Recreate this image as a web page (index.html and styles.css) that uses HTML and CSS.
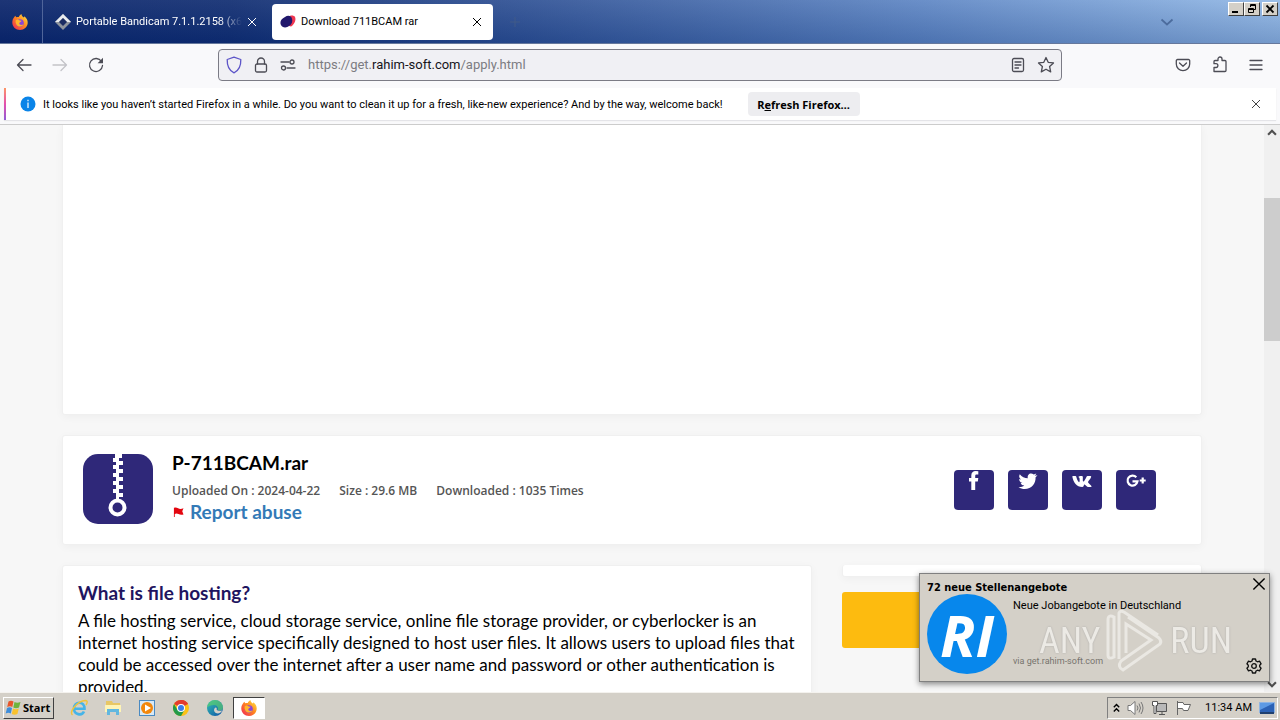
FILE: index.html
```html
<!DOCTYPE html>
<html lang="en">
<head>
<meta charset="utf-8">
<title>Download 711BCAM rar</title>
<link rel="stylesheet" href="styles.css">
</head>
<body class="desktop">
<svg class="defs" aria-hidden="true">
  <defs>
    <linearGradient id="flame" x1="1" y1="0" x2="0" y2="1"><stop offset="0" stop-color="#fff04a"/><stop offset=".45" stop-color="#ff8a1e"/><stop offset="1" stop-color="#f0205a"/></linearGradient>
    <linearGradient id="edgeg" x1="0" y1="0" x2="1" y2="1"><stop offset="0" stop-color="#35c1b1"/><stop offset="1" stop-color="#0b4fa8"/></linearGradient>
    <symbol id="firefox" viewBox="0 0 16 16">
      <path fill="url(#flame)" d="M2.300 3 3.300 1.800 4.200 3.300C5 3 6 2.900 6.800 3.100 7 2 8 .8 9.400 0 9.500 2 11 2.700 12 3.500L12.400 2.300C14.500 4 15.900 6.300 15.700 9 15.400 13 12.200 16 8 16 3.800 16 .4 12.900.3 8.800.2 6.500 1 4.500 2.300 3Z"/>
      <circle cx="8" cy="9" r="3.800" fill="#8a45d8"/>
      <path fill="#ffb52b" d="M3.600 6.500C5 5.200 6.600 5.300 7.700 6.400L9.600 6.700C9.300 7.900 7.600 7.900 7.300 9 7 11 9.600 11.500 11.400 10.300 10.500 13.200 5.500 13.300 4.200 10.200 3.600 9 3.400 7.600 3.600 6.500Z"/>
    </symbol>
    <symbol id="close" viewBox="0 0 10 10"><path d="M1 1 9 9M9 1 1 9" fill="none" stroke="currentColor" stroke-width="1"/></symbol>
    <symbol id="chevron" viewBox="0 0 14 8"><path d="M1.500 1.500 7 6.500 12.500 1.500" fill="none" stroke="currentColor" stroke-width="1.700"/></symbol>
  </defs>
</svg>

<header class="titlebar">
  <div class="pinned"><svg width="16" height="16"><use href="#firefox"/></svg></div>
  <div class="tab">
    <svg width="16" height="16" viewBox="0 0 16 16"><path d="M8 0 16 8 8 16 0 8Z" fill="#8f959e"/><path d="M8 0 16 8H12L8 4 4 8H0Z" fill="#e8ebef"/><path d="M8 4 12 8 8 12 4 8Z" fill="#1c2d63"/></svg>
    <span class="tab-title fade">Portable Bandicam 7.1.1.2158 (x64</span>
    <button class="plain" aria-label="Close tab"><svg width="10" height="10"><use href="#close"/></svg></button>
  </div>
  <div class="tab active">
    <svg width="16" height="16" viewBox="0 0 16 16"><path fill="#ef3550" d="M8 3C10 1 14 1 15 3 16.500 6 14 11 11 12.500L5 11Z"/><path fill="#21186c" d="M5 3C8 .5 12 2 12 5 13 8 11 11 9 12 7 14 2 14 1 11-.5 8 1 5 5 3Z"/></svg>
    <span class="tab-title">Download 711BCAM rar</span>
    <button class="plain" aria-label="Close tab"><svg width="10" height="10"><use href="#close"/></svg></button>
  </div>
  <button class="plain new-tab" aria-label="New tab"><svg width="10" height="10" viewBox="0 0 10 10"><path d="M5 0V10M0 5H10" stroke="currentColor" stroke-width="1"/></svg></button>
  <button class="plain all-tabs" aria-label="List all tabs"><svg width="14" height="8"><use href="#chevron"/></svg></button>
  <div class="window-buttons">
    <button aria-label="Minimize"><svg width="10" height="10" viewBox="0 0 10 10"><path d="M1 7h6v2H1Z"/></svg></button>
    <button aria-label="Restore"><svg width="10" height="10" viewBox="0 0 10 10"><path fill="none" stroke="#000" d="M3.500 3V.5h5v5H7M3 1.500H9M1.500 4.500h5v4h-5ZM1 5.500H7"/></svg></button>
    <button class="gap" aria-label="Close"><svg width="10" height="10" viewBox="0 0 10 10"><path stroke="#000" stroke-width="1.800" d="M1.500 1.500 8.500 8.500M8.500 1.500 1.500 8.500"/></svg></button>
  </div>
</header>

<nav class="toolbar">
  <button class="plain" aria-label="Back"><svg width="16" height="14" viewBox="0 0 16 14"><path d="M15 7H1.500M7 1.500 1.500 7 7 12.500" class="line"/></svg></button>
  <button class="plain dim" aria-label="Forward"><svg width="16" height="14" viewBox="0 0 16 14"><path d="M1 7H14.500M9 1.500 14.500 7 9 12.500" class="line"/></svg></button>
  <button class="plain" aria-label="Reload"><svg width="16" height="16" viewBox="0 0 16 16"><path d="M13.500 4.500A6.500 6.500 0 1 0 14.500 8.500" class="line"/><path fill="currentColor" d="M15 .8V6.200H9.600Z"/></svg></button>
  <div class="urlbar">
    <svg class="shield" width="16" height="18" viewBox="0 0 16 18"><path d="M8 1.200 14.800 3.500C15 9.500 13 14.500 8 16.800 3 14.500 1 9.500 1.200 3.500Z" class="line"/></svg>
    <svg width="14" height="16" viewBox="0 0 14 16"><rect x="1.500" y="7" width="11" height="8" rx="1.500" class="line"/><path d="M3.500 7V4.500a3.500 3.500 0 0 1 7 0V7" class="line"/></svg>
    <svg width="16" height="12" viewBox="0 0 16 12"><path d="M1 3H9M7 9H15" class="line"/><circle cx="12" cy="3" r="2" class="line"/><circle cx="3.500" cy="9" r="2" class="line"/></svg>
    <span class="address"><span class="sub">https://get.</span>rahim-soft.com<span class="sub">/apply.html</span></span>
    <svg width="14" height="16" viewBox="0 0 14 16"><rect x="1.500" y="1.500" width="11" height="13" rx="1.500" class="line"/><path d="M4 5H10M4 8H10M4 11H7.500" class="line"/></svg>
    <svg width="18" height="18" viewBox="0 0 18 18"><path d="M9 1.500 11.200 6.300 16.500 6.900 12.600 10.500 13.700 15.900 9 13.200 4.300 15.900 5.400 10.500 1.500 6.900 6.800 6.300Z" class="line"/></svg>
  </div>
  <div class="tools">
    <button class="plain" aria-label="Pocket"><svg width="16" height="14" viewBox="0 0 16 14"><path d="M2.500 1.500h11a1.200 1.200 0 0 1 1.200 1.200V6A6.700 6.700 0 0 1 1.300 6V2.700A1.200 1.200 0 0 1 2.500 1.500ZM4.500 5 8 8.300 11.500 5" class="line"/></svg></button>
    <button class="plain" aria-label="Extensions"><svg width="16" height="17" viewBox="0 0 16 17"><path d="M2 15.500V11.500H4a1.900 1.900 0 0 0 0-3.800H2V5.500Q2 4.500 3 4.500H6V3a2 2 0 0 1 4 0V4.500H13Q14 4.500 14 5.500V14.500Q14 15.500 13 15.500Z" class="line"/></svg></button>
    <button class="plain" aria-label="Menu"><svg width="14" height="12" viewBox="0 0 14 12"><path d="M1 1.500H13M1 6H13M1 10.500H13" class="line"/></svg></button>
  </div>
</nav>

<section class="notice">
  <svg width="16" height="16" viewBox="0 0 16 16"><circle cx="8" cy="8" r="7.500" fill="#0a84e8"/><path d="M7.400 6.500h1.200V12H7.400ZM7.400 3.800h1.200V5.200H7.400Z" fill="#fff"/></svg>
  <span>It looks like you haven’t started Firefox in a while. Do you want to clean it up for a fresh, like-new experience? And by the way, welcome back!</span>
  <button class="refresh">R<u>e</u>fresh Firefox…</button>
  <button class="plain dismiss" aria-label="Dismiss"><svg width="10" height="10"><use href="#close"/></svg></button>
</section>

<div class="viewport">
  <main class="page">
    <div class="container">
      <section class="card banner"></section>
      <section class="card file">
        <svg class="zip" width="70" height="70" viewBox="0 0 70 70"><rect width="70" height="70" rx="15" fill="#2f2879"/><path fill="#fff" d="M32 0h7v4h-7ZM30 4h5v4h-5ZM34 7h6v4h-6ZM30 11h5v4h-5ZM34 15h6v4h-6ZM30 19h5v4h-5ZM34 23h6v4h-6ZM30 27h5v4h-5ZM34 31h6v4h-6ZM30 35h5v4h-5ZM34 39h6v4h-6ZM33 0h3v46h-3Z"/><circle cx="34.500" cy="53.500" r="7" fill="#2f2879" stroke="#fff" stroke-width="4"/></svg>
        <div class="info">
          <h1>P-711BCAM.rar</h1>
          <div class="meta"><span>Uploaded On : 2024-04-22</span><span>Size : 29.6 MB</span><span>Downloaded : 1035 Times</span></div>
          <a class="report" href="#"><svg width="13" height="10" viewBox="0 0 13 12"><path fill="#e3060f" d="M1 1Q3.500 0 6 1.500T12.500 1.500L11 5 12.500 9Q9 10 6.500 8.500T2 8.500V12H1Z"/></svg>Report abuse</a>
        </div>
        <div class="social">
          <a href="#" aria-label="Facebook"><svg width="20" height="20" viewBox="0 0 20 20"><path fill="#fff" d="M14.300.3V3.600H12.700C11.400 3.600 11.200 4.200 11.200 5.100V7H14.300L13.800 10.400H11.200V19H7.300V10.400H5V7H7.300V4.500C7.300 1.600 9.100 0 11.700 0Z"/></svg></a>
          <a href="#" aria-label="Twitter"><svg width="20" height="20" viewBox="0 0 20 20"><path fill="#fff" d="M19.500 4.300A8 8 0 0 1 17.600 6.300C17.900 12.500 13.500 18 6.800 18 4.500 18 2.300 17.300.5 16.200 2.600 16.400 4.700 15.800 6.300 14.600A4 4 0 0 1 2.600 11.900C3.200 12 3.800 12 4.300 11.800A4 4 0 0 1 1.200 7.900C1.700 8.200 2.300 8.400 3 8.400A4 4 0 0 1 1.800 3.200 11 11 0 0 0 9.800 7.200C9 3.500 12.500.9 15.800 3.500 16.700 3.300 17.500 3 18.300 2.500 18 3.500 17.400 4.200 16.600 4.700Z"/></svg></a>
          <a href="#" aria-label="VK"><svg width="20" height="20" viewBox="0 0 20 20"><path fill="#fff" d="M10.300 16C4.500 16 1.500 11.500.3 5.500Q.3 5 1 5H3.500Q4 5 4.200 5.500C4.800 8 5.800 10.300 7 11.200 7.800 11.500 7.700 9 7.500 7.300 7.300 6.500 6.800 6.400 6.400 6.100 7 5 9 4.800 10.200 5.100 11.200 5.300 10.800 7 10.800 9 10.800 10.800 11.500 10.700 12.200 9.900 13.200 8.800 14 7.200 14.700 5.600Q14.900 5 15.500 5H18.400C19.900 5 19 6.600 18.300 7.700 17.300 9.300 15.800 10.500 16 11.200 16.300 12.200 18.500 13.500 19.400 15 19.700 15.600 19.400 16 18.700 16H15.800C14.800 16 13.500 13.800 12.400 13.600 11.500 13.500 12.300 16 10.300 16Z"/></svg></a>
          <a href="#" aria-label="Google Plus"><svg width="22" height="20" viewBox="0 0 22 20"><path fill="none" stroke="#fff" stroke-width="2.200" d="M11.300 6.200A5 5 0 1 0 12.500 10.400H7.500"/><path stroke="#fff" stroke-width="2.200" d="M17.700 6.500V12.500M14.700 9.500H20.700"/></svg></a>
        </div>
      </section>
      <div class="columns">
        <article class="card about">
          <h2>What is file hosting?</h2>
          <p>A file hosting service, cloud storage service, online file storage provider, or cyberlocker is an internet hosting service specifically designed to host user files. It allows users to upload files that could be accessed over the internet after a user name and password or other authentication is provided.</p>
        </article>
        <aside>
          <div class="card strip"></div>
          <button class="download" aria-label="Download"></button>
        </aside>
      </div>
    </div>
  </main>
  <div class="scrollbar">
    <svg width="10" height="7" viewBox="0 0 14 8"><path d="M1.500 7 7 1.500 12.500 7" fill="none" stroke="#505050" stroke-width="3"/></svg>
    <div class="thumb"></div>
    <svg class="down" width="10" height="7" viewBox="0 0 14 8"><path d="M1.500 1 7 6.500 12.500 1" fill="none" stroke="#505050" stroke-width="3"/></svg>
  </div>
</div>

<aside class="toast">
  <div class="toast-head"><b>72 neue Stellenangebote</b></div>
  <div class="toast-body">
    <div class="logo">RI</div>
    <div class="toast-text"><span>Neue Jobangebote in Deutschland</span><small>via get.rahim-soft.com</small></div>
  </div>
  <button class="plain toast-close" aria-label="Close notification"><svg width="14" height="14"><use href="#close"/></svg></button>
  <button class="plain toast-gear" aria-label="Settings"><svg width="16" height="16" viewBox="0 0 16 16"><path fill="none" stroke="#111" stroke-width="1.300" stroke-linejoin="round" d="M6.500 1h3l.5 2 1.500.8 2-.6 1.600 2.600L13.700 7.200v1.600l1.400 1.400-1.600 2.600-2-.6L10 13l-.5 2h-3L6 13l-1.500-.8-2 .6L.9 10.200 2.300 8.800V7.200L.9 5.800 2.500 3.200l2 .6L6 3Z"/><circle cx="8" cy="8" r="2.300" fill="none" stroke="#111" stroke-width="1.300"/></svg></button>
</aside>
<div class="watermark">
  <span>ANY</span>
  <svg width="58" height="64" viewBox="0 0 58 64"><g fill="none" stroke="#f2f0ec" stroke-width="3"><path d="M8 48V8Q2 5 2 11V46Q2 51 8 48Z"/><path d="M13 50V4Q14 1 18 3L52 26M20 44V15L45 31 15 52Q11 58 17 61L54 35Q56 32 53 29L22 8"/></g></svg>
  <span>RUN</span>
</div>

<footer class="taskbar">
  <button class="start"><svg width="17" height="17" viewBox="0 0 17 17"><path fill="#e8562a" d="M3.500 2.500Q6 .8 8.500 2.500L7.300 8Q5 6.500 2.200 8Z"/><path fill="#6fb43c" d="M9.500 3Q12 4.500 15.500 3L14 8.500Q11 10 8.300 8.500Z"/><path fill="#3c8ddb" d="M2 9Q4.500 7.500 7 9L5.800 14.500Q3.500 13 .7 14.500Z"/><path fill="#f9c22e" d="M8 9.500Q11 11 13.800 9.500L12.400 15Q9.500 16.500 6.800 15Z"/></svg>Start</button>
  <div class="launch">
    <button class="plain" aria-label="Internet Explorer"><svg width="18" height="18" viewBox="0 0 18 18"><path fill="none" stroke="#45b4e8" stroke-width="2.600" d="M4.500 9.800H14.500C14.700 1.500 4 2 4 9.500 4 16 12 17 14 12.500"/><path fill="none" stroke="#efc33c" stroke-width="1.400" d="M2.500 16C-1 13 7 2 15.500 1.500 18 1.500 17.300 4 16 6"/></svg></button>
    <button class="plain" aria-label="Explorer"><svg width="18" height="18" viewBox="0 0 18 18"><path fill="#e8c764" d="M2 2h6l1 2h7v9H2Z"/><path fill="#fff4b5" d="M1 6h16v7H1Z"/><path fill="#62b7df" d="M3 10h12v6h-3v-3H6v3H3Z"/></svg></button>
    <button class="plain" aria-label="Media Player"><svg width="18" height="18" viewBox="0 0 18 18"><rect x="1.500" y="1.500" width="15" height="15" fill="#d8e9f6" stroke="#4a8ac2"/><circle cx="9" cy="9" r="6" fill="#f2870c"/><path fill="#fff" d="M7 5.500 13 9 7 12.500Z"/></svg></button>
    <button class="plain" aria-label="Chrome"><svg width="16" height="16" viewBox="0 0 16 16"><circle cx="8" cy="8" r="8" fill="#fbc116"/><path fill="#e33b2e" d="M8 8 1.070 4A8 8 0 0 1 14.930 4Z"/><path fill="#e33b2e" d="M8 4H14.930A8 8 0 0 0 8 0Z"/><path fill="#229a4a" d="M1.070 4A8 8 0 0 0 8 16L11.500 10 8 8 4.500 10Z"/><circle cx="8" cy="8" r="4" fill="#fff"/><circle cx="8" cy="8" r="3" fill="#3b7de9"/></svg></button>
    <button class="plain" aria-label="Edge"><svg width="16" height="16" viewBox="0 0 16 16"><circle cx="8" cy="8" r="8" fill="url(#edgeg)"/><path fill="#5fd06c" d="M8 0A8 8 0 0 1 16 7.500C16 10 13.500 11 10.500 10 12 8 10 5 7 5 4 5 1.500 6 .1 7.500A8 8 0 0 1 8 0Z" opacity=".65"/><path fill="#d4d0c8" d="M9.600 9.800C10.500 11 14 11.200 15.300 10.300 14.500 13 11 14 9 13 6.500 12 6.500 8.500 8.500 7.500 10 7.800 10 9 9.600 9.800Z"/></svg></button>
    <button class="plain running" aria-label="Firefox"><svg width="16" height="16"><use href="#firefox"/></svg></button>
  </div>
  <div class="tray">
    <svg width="7" height="10" viewBox="0 0 7 10"><path fill="none" stroke="#000" stroke-width="1.400" d="M.8 4.200 3.500 1.500 6.200 4.200M.8 8.500 3.500 5.800 6.200 8.500"/></svg>
    <svg width="17" height="16" viewBox="0 0 17 16"><path fill="#fff" stroke="#777" d="M1 5.500h2.500L8 1.500v13L3.500 10.500H1Z"/><path fill="none" stroke="#777" d="M10 5.500Q12 8 10 10.500M12 3.500Q15 8 12 12.500M14 2Q18 8 14 14"/></svg>
    <svg width="17" height="16" viewBox="0 0 17 16"><path fill="#b8b8b8" stroke="#555" d="M5.500 3.500h10v8h-10ZM8 14.500h6M11 12v2"/><path fill="#fff" stroke="#555" d="M1.500 1.500h5v4h-1.500v8h-2v-8H1.500Z"/></svg>
    <svg width="17" height="16" viewBox="0 0 17 16"><path fill="#fff" stroke="#666" d="M2.500 1V15M2.500 2.500H8l1 2h6.500L13 10.500H8.500L7.500 8.500h-5"/></svg>
    <span class="clock">11:34 AM</span>
    <svg width="16" height="14" viewBox="0 0 16 14"><path fill="#2c62b5" stroke="#8eb4e3" d="M.5 1.500h15v10H.5Z"/><path fill="#5d9ae4" d="M1 2h14L1 9Z"/><path fill="#20406f" d="M1 11h14v2H1Z"/></svg>
  </div>
</footer>
</body>
</html>
```
FILE: styles.css
```css
* { box-sizing: border-box; }
.desktop { margin: 0; height: 100vh; overflow: hidden; display: flex; flex-direction: column; position: relative; font-family: Roboto, "DejaVu Sans", sans-serif; font-size: 11px; color: #000; background: #f9f9fb; }
.desktop svg { display: block; flex: none; }
.desktop .defs { position: absolute; width: 0; height: 0; }
button { font: inherit; color: inherit; padding: 0; }
.plain { border: 0; background: none; display: flex; align-items: center; justify-content: center; }
.line { fill: none; stroke: currentColor; stroke-width: 1.3; stroke-linejoin: round; stroke-linecap: round; }

.titlebar { height: 44px; flex: none; display: flex; align-items: center; position: relative; border-bottom: 1px solid #66789c; background: linear-gradient(#ffffff14, #00206033), linear-gradient(90deg, #0a246a 0%, #0f2c71 18%, #2d4f93 40%, #5e86c4 72%, #93b9e6 100%); }
.pinned { width: 43px; height: 43px; display: flex; align-items: center; justify-content: center; padding-right: 3px; border-right: 1px solid #50659a; }
.tab { width: 221px; height: 36px; margin-right: 4px; padding: 0 11px 0 8px; display: flex; align-items: center; gap: 5px; border-radius: 4px; color: #fff; }
.pinned + .tab { margin-left: 4px; }
.tab.active { background: #fff; color: #000; }
.tab-title { flex: 1; min-width: 0; overflow: hidden; white-space: nowrap; }
.fade { mask-image: linear-gradient(90deg, #000 86%, transparent 100%); }
.new-tab { margin-left: 13px; color: #415a88; }
.all-tabs { margin-left: auto; margin-right: 106px; color: #4c6c9d; }
.window-buttons { position: absolute; right: 2px; top: 2px; display: flex; }
.window-buttons button { width: 16px; height: 14px; display: flex; align-items: center; justify-content: center; background: #d4d0c8; border: 1px solid; border-color: #fff #404040 #404040 #fff; }
.window-buttons .gap { margin-left: 2px; }

.toolbar { height: 41px; flex: none; padding: 0 17px 0 16px; display: flex; align-items: center; gap: 20px; color: #4c4c55; }
.toolbar > .plain { width: 16px; }
.toolbar .dim { color: #c3c3c8; }
.urlbar { flex: 0 1 844px; height: 32px; margin-left: 94px; padding: 0 6px 0 7px; display: flex; align-items: center; gap: 12px; border: 1px solid #7b7b85; border-radius: 4px; background: #f0f0f4; }
.urlbar .shield { color: #5d55c8; }
.address { flex: 1; font-size: 13px; color: #15141a; }
.sub { color: #7c7c82; }
.tools { margin-left: auto; display: flex; align-items: center; gap: 21px; }

.notice { height: 32px; flex: none; margin: 3px 4px 4px; padding: 0 15px 0 14px; display: flex; align-items: center; gap: 7px; background: #fff; border-left: 2px solid; border-image: linear-gradient(#ff9a62, #e34fae, #8a5cd8) 1; white-space: nowrap; box-shadow: 0 1px 1px #e4e4e8; }
.refresh { width: 112px; height: 24px; margin-left: 18px; border: 0; border-radius: 4px; background: #ededf0; font-family: "Open Sans", sans-serif; font-weight: bold; }
.dismiss { margin-left: auto; color: #444; }

.viewport { flex: 1; min-height: 0; display: flex; border-top: 1px solid #ccc; }
.page { flex: 1; min-width: 0; overflow: hidden; background: #f7f7f7; font-family: Lato, sans-serif; font-size: 16px; color: #000; }
.container { max-width: 1140px; margin: 0 auto; }
.card { background: #fff; border: 1px solid #f0f0f0; border-radius: 3px; box-shadow: 0 2px 8px #0000000a; }
.banner { height: 290px; border-top: 0; border-radius: 0 0 3px 3px; margin-bottom: 20px; }
.file { min-height: 110px; margin-bottom: 20px; padding: 18px 45px 20px 20px; display: flex; align-items: flex-start; gap: 19px; }
.info { flex: 1; }
.info h1 { margin: 0; font-size: 19px; line-height: 18px; font-weight: 700; }
.meta { margin-top: 9px; display: flex; gap: 19px; font-family: "Open Sans", sans-serif; font-size: 12px; line-height: 20px; font-weight: 600; color: #555; }
.report { display: flex; align-items: center; gap: 5px; font-size: 19px; line-height: 22px; font-weight: 700; color: #337ab7; text-decoration: none; }
.social { display: flex; gap: 14px; margin-top: 16px; }
.social a { width: 40px; height: 40px; padding-top: 1px; display: flex; justify-content: center; border-radius: 4px; background: #2f2879; }
.columns { display: grid; grid-template-columns: minmax(0, 750fr) minmax(0, 360fr); gap: 30px; }
.about { min-height: 200px; padding: 15px; }
.about h2 { margin: 0; font-size: 19px; line-height: 24px; color: #1f1560; }
.about p { margin: 5px 0 0; font-size: 17px; line-height: 22px; }
.strip { height: 12px; border-top: 0; }
.download { display: block; width: 100%; height: 56px; margin-top: 15px; border: 0; border-radius: 3px; background: #fdbb0f; }
.scrollbar { width: 16px; display: flex; flex-direction: column; align-items: center; padding: 4px 0; background: #f0f0f0; }
.thumb { width: 16px; height: 143px; margin-top: 62px; background: #cdcdcd; }
.down { margin-top: auto; }

.toast { position: absolute; right: 10px; bottom: 38px; width: 351px; height: 109px; padding: 7px; background: #d4d0c8; border: 1px solid #808080; box-shadow: 0 2px 6px #0007; }
.toast-head { line-height: 13px; font-family: "DejaVu Sans Condensed", "DejaVu Sans", sans-serif; }
.toast-body { display: flex; gap: 6px; }
.logo { width: 80px; height: 80px; border-radius: 50%; display: flex; align-items: center; justify-content: center; background: #0787ec; color: #fff; font: italic 700 58px "Open Sans", sans-serif; }
.toast-text { display: flex; flex-direction: column; justify-content: space-between; padding: 5px 0 8px; }
.toast-text small { font-size: 9px; color: #77746e; }
.toast-close { position: absolute; right: 3px; top: 3px; }
.toast-gear { position: absolute; right: 7px; bottom: 7px; }
.watermark { position: absolute; right: 48px; bottom: 47px; display: flex; align-items: center; gap: 6px; opacity: .75; color: #f5f3ef; font: 36px "Roboto Condensed", "Open Sans Condensed", Roboto, sans-serif; text-shadow: 0 0 2px #999; pointer-events: none; }

.taskbar { height: 28px; flex: none; display: flex; align-items: center; padding: 2px 2px 0 3px; background: #d4d0c8; border-top: 1px solid #f4f2ee; position: relative; }
.start { width: 51px; height: 22px; display: flex; align-items: center; gap: 1px; padding-left: 1px; border: 1px solid; border-color: #fff #404040 #404040 #fff; background: #d4d0c8; font-family: "Open Sans", sans-serif; font-weight: bold; }
.launch { display: flex; margin-left: 9px; gap: 2px; }
.launch button { width: 32px; height: 22px; }
.launch .running { background: #fff; border: 1px solid; border-color: #404040 #fff #fff #404040; }
.tray { margin-left: auto; height: 22px; padding: 0 2px 0 5px; display: flex; align-items: center; gap: 7px; border: 1px solid; border-color: #808080 #fff #fff #808080; }
.clock { margin-left: 6px; }
```
